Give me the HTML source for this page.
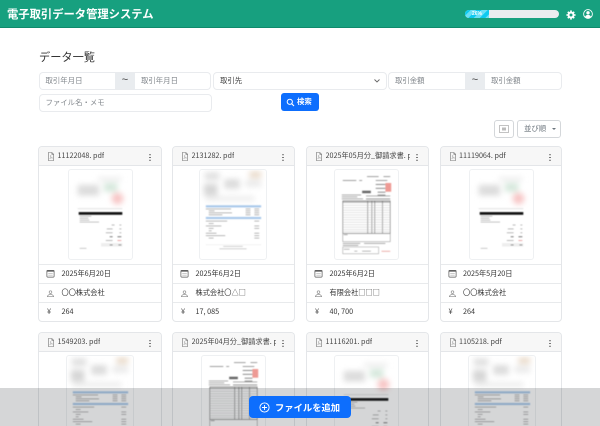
<!DOCTYPE html>
<html lang="ja"><head><meta charset="utf-8"><title>電子取引データ管理システム</title>
<style>
*{box-sizing:border-box}
html,body{margin:0;padding:0;width:600px;height:426px;overflow:hidden}
body{background:#fff;font-family:"Liberation Sans","Noto Sans CJK JP",sans-serif;color:#212529}
#root{position:relative;width:600px;height:426px;overflow:hidden;background:#fff}
.abs{position:absolute}
#hd{left:0;top:0;width:600px;height:28px;background:#17a07f;border-bottom:1px solid #0f8a6c}
#ttl{left:7px;top:5px;font-size:11.3px;line-height:18px;font-weight:700;color:#fff;font-family:"Noto Sans CJK JP",sans-serif;white-space:nowrap}
#pg{left:465px;top:10px;width:94px;height:8px;border-radius:4px;background:#e9ecef;overflow:hidden}
#pg div{width:24px;height:8px;background:repeating-linear-gradient(135deg,#0dcaf0 0 4px,#6adff6 4px 8px);color:#fff;font-size:5px;line-height:8px;font-weight:700;text-align:center}
#h1{left:39px;top:48px;font-size:11.2px;line-height:18px;color:#333;font-family:"Noto Sans CJK JP",sans-serif;white-space:nowrap}
.in{background:#fff;border:1px solid #e9ebee;border-radius:4px;height:18px;font-size:7.4px;line-height:16px;color:#82878c;padding-left:6px;font-family:"Noto Sans CJK JP",sans-serif;white-space:nowrap}
.gp{background:#e9ecef;border-top:1px solid #e9ebee;border-bottom:1px solid #e9ebee;width:20px;height:18px;font-size:11px;line-height:15px;text-align:center;color:#444}
#sb{left:281px;top:93px;width:38px;height:18px;background:#0d6efd;border-radius:3px;color:#fff;font-size:7.4px;line-height:18px;font-weight:700;padding-left:16px;font-family:"Noto Sans CJK JP",sans-serif}
.bt{border:1px solid #d4d7da;border-radius:3px;background:#fff}
#st{left:517px;top:120px;width:44px;height:18px;font-size:7.4px;line-height:16px;color:#6c757d;padding-left:6px;font-family:"Noto Sans CJK JP",sans-serif}
#st:after{content:"";position:absolute;left:34px;top:7px;border:2px solid transparent;border-top:2.5px solid #6c757d}
.c{position:absolute;height:176px;border:1px solid #e4e6e9;border-radius:4px;background:#fff;overflow:hidden;font-family:"Noto Sans CJK JP",sans-serif}
.c.s{height:94px;border-radius:4px 4px 0 0;border-bottom:0}
.h{position:absolute;left:0;top:0;right:0;height:19px;background:#f7f7f7;border-bottom:1px solid #e4e6e9;font-size:7.2px;line-height:18px;color:#444;white-space:nowrap;overflow:hidden}
.h span{position:absolute;left:18.5px;top:0;max-width:84px;overflow:hidden}
.h svg{position:absolute;left:8px;top:5px}
.dt{position:absolute;right:10px;top:9.5px;width:1.6px;height:1.6px;border-radius:50%;background:#666;box-shadow:0 2.8px 0 #666,0 -2.8px 0 #666}
.r{position:absolute;left:0;right:0;height:19.3px;border-top:1px solid #e8eaec;font-size:7.2px;line-height:18px;color:#333;white-space:nowrap}
.r span{position:absolute;left:22.5px;top:0}
.r svg{position:absolute;left:7px;top:4.5px}
.r i{position:absolute;left:8px;top:0;font-style:normal;font-size:7.4px;color:#444}
.r1{top:116.5px}.r2{top:136px}.r3{top:155px}
.t{position:absolute;top:22px;height:91px;border:1px solid #eef0f2;border-radius:3px;background:#fff;overflow:hidden}
.t use{filter:blur(.45px)}
#ov{left:0;top:388px;width:600px;height:38px;background:rgba(45,50,56,.2)}
#add{left:249px;top:396px;width:102px;height:22px;background:#0d6efd;border-radius:4px;color:#fff;font-size:9.3px;line-height:22px;font-weight:700;padding-left:26px;font-family:"Noto Sans CJK JP",sans-serif;white-space:nowrap}
</style></head><body><div id="root">
<svg width="0" height="0" style="position:absolute">
<defs>
<filter id="b3" x="-30%" y="-30%" width="160%" height="160%"><feGaussianBlur stdDeviation="3"/></filter>
<filter id="b1"><feGaussianBlur stdDeviation=".3"/></filter>
<symbol id="pdf" viewBox="0 0 9 10"><path d="M1.500.5h4l2 2v7h-6z M5.500.5v2h2" fill="none" stroke="#777" stroke-width=".7"/><path d="M3 7.600c1-1 1.600-2.600 1.400-3.600-.1-.6-.7-.4-.6.3.2 1 1.200 2.400 2.200 2.600.6.1.6-.5 0-.5-1.100 0-2.300.5-3 1.200z" fill="none" stroke="#888" stroke-width=".4"/></symbol>
<symbol id="cal" viewBox="0 0 10 10"><rect x="1" y="1.500" width="8" height="7.500" rx=".8" fill="none" stroke="#555" stroke-width=".8"/><rect x="1" y="1.500" width="8" height="1.500" fill="#666"/><path d="M2.500 5h5M2.500 6.800h5" stroke="#999" stroke-width=".6"/></symbol>
<symbol id="usr" viewBox="0 0 10 10"><circle cx="5" cy="3.500" r="1.500" fill="none" stroke="#888" stroke-width=".7"/><path d="M1.500 8.500c.5-2 1.800-2.500 3.500-2.500s3 .5 3.500 2.500z" fill="none" stroke="#888" stroke-width=".7"/></symbol>
<symbol id="t1" viewBox="0 0 65 91">
<g filter="url(#b3)"><rect x="9" y="15" width="22" height="11" fill="#dcdcdc"/><rect x="36" y="13" width="14" height="9" fill="#d5e8dc"/><circle cx="50" cy="29" r="6" fill="#f7c4c4"/><rect x="30" y="7" width="24" height="4" fill="#ececec"/></g>
<rect x="9" y="39" width="46" height="1" fill="#e2e2e2" filter="url(#b1)"/>
<rect x="10" y="43" width="45" height="2.800" fill="#111"/>
<g filter="url(#b1)" fill="#999"><rect x="11" y="47" width="12" height=".6"/><rect x="11" y="49" width="9" height=".6"/><rect x="11" y="51" width="10" height=".6"/><rect x="11" y="53" width="20" height=".6"/>
<rect x="44" y="56" width="3" height=".7"/><rect x="52" y="56" width="2" height=".7"/><rect x="39" y="60" width="6" height=".7"/><rect x="52" y="60" width="2" height=".7"/><rect x="38" y="64" width="7" height=".7"/><rect x="52" y="64" width="2" height=".7"/><rect x="42" y="68" width="3" height=".9" fill="#666"/><rect x="50" y="68" width="4" height=".9" fill="#666"/><rect x="38" y="72" width="7" height=".7"/><rect x="50" y="72" width="4" height=".7" fill="#e08080"/></g>
<rect x="33" y="75" width="22" height="3.500" fill="#eee"/><rect x="42" y="76.500" width="3" height=".8" fill="#777"/><rect x="51" y="76.500" width="3" height=".8" fill="#777"/>
<rect x="11" y="80" width="7" height=".8" fill="#bbb"/>
</symbol>
<symbol id="t2" viewBox="0 0 68 91">
<g filter="url(#b3)"><rect x="5" y="2" width="15" height="8" fill="#e0e0e0"/><rect x="25" y="9" width="16" height="10" fill="#dcdcdc"/><rect x="4" y="14" width="14" height="12" fill="#d6d6d6"/><rect x="51" y="1" width="12" height="7" fill="#eadbcb"/><rect x="47" y="10" width="16" height="7" fill="#eaeaea"/><rect x="6" y="27" width="50" height="4" fill="#e8e8e8"/></g>
<rect x="6" y="36" width="57" height="2.200" fill="#a8c8ea"/><rect x="6" y="48" width="57" height="2.200" fill="#a8c8ea"/>
<g filter="url(#b1)" fill="#888"><rect x="6" y="39.500" width="26" height=".6"/><rect x="47" y="39.500" width="5" height=".6"/><rect x="56" y="39.500" width="5" height=".6"/><rect x="9" y="41.500" width="6" height=".6"/><rect x="47" y="41.500" width="5" height=".6"/><rect x="56" y="41.500" width="5" height=".6"/><rect x="9" y="43.500" width="24" height=".6"/><rect x="47" y="43.500" width="5" height=".6"/><rect x="56" y="43.500" width="5" height=".6"/><rect x="9" y="45.500" width="14" height=".6"/><rect x="47" y="45.500" width="5" height=".6"/><rect x="56" y="45.500" width="5" height=".6"/>
<rect x="6" y="52" width="22" height=".6"/><rect x="56" y="52" width="5" height=".6"/><rect x="9" y="54.500" width="5" height=".6"/><rect x="6" y="57" width="16" height=".6"/><rect x="56" y="57" width="5" height=".6"/><rect x="9" y="59.500" width="5" height=".6"/><rect x="56" y="59.500" width="5" height=".6"/><rect x="9" y="62" width="3" height=".6"/><rect x="6" y="64.500" width="11" height=".6"/><rect x="56" y="64.500" width="5" height=".6"/><rect x="6" y="67" width="20" height=".6"/><rect x="56" y="67" width="5" height=".6"/><rect x="9" y="69.500" width="5" height=".6"/><rect x="56" y="69.500" width="5" height=".6"/></g>
<rect x="6" y="76.500" width="57" height=".4" fill="#ddd"/><rect x="24" y="78" width="20" height=".7" fill="#bbb" filter="url(#b1)"/><rect x="20" y="80.500" width="28" height=".7" fill="#bbb" filter="url(#b1)"/>
</symbol>
<symbol id="t3" viewBox="0 0 65 91">
<g filter="url(#b1)" fill="#888"><rect x="33" y="6" width="12" height=".8"/><rect x="50" y="6" width="7" height=".8"/><rect x="8" y="10" width="14" height=".8"/><rect x="25" y="10" width="3" height=".8"/><rect x="42" y="10" width="12" height=".8"/>
<rect x="42" y="14" width="10" height="1"/><rect x="42" y="18" width="10" height="1"/><rect x="44" y="22" width="8" height="1"/><rect x="44" y="25" width="8" height="1"/><rect x="28" y="21" width="9" height="2.500" fill="#666"/>
<rect x="7" y="25" width="20" height=".7"/><rect x="7" y="27" width="16" height=".7"/><rect x="7" y="29" width="22" height=".7"/><rect x="32" y="26" width="25" height=".7"/><rect x="32" y="29" width="25" height=".9"/></g>
<rect x="52" y="13" width="6" height="9" fill="#ee9a94" filter="url(#b1)"/>
<rect x="8" y="31.500" width="49" height="2" fill="#bbb"/>
<g fill="none" stroke="#666" stroke-width=".55"><rect x="8" y="31.500" width="49" height="33.500"/><path d="M33.700 31.500v33.500M38 31.500v33.500M41 31.500v33.500M49 31.500v33.500"/></g>
<g stroke="#bbb" stroke-width=".4"><path d="M8 36h49M8 38.500h49M8 41h49M8 43.500h49M8 46h49M8 48.500h49M8 51h49M8 53.500h49M8 56h49M8 58.500h49M8 61h49M8 63h49"/></g>
<rect x="8" y="65" width="49" height="8.500" fill="none" stroke="#888" stroke-width=".5"/><rect x="9" y="66" width="4" height=".7" fill="#888"/>
<g filter="url(#b1)" fill="#888"><rect x="8" y="75" width="18" height=".7"/><rect x="8" y="77" width="16" height=".7"/><rect x="30" y="75" width="22" height=".7"/></g>
<rect x="8" y="79" width="37" height="7" fill="none" stroke="#999" stroke-width=".5"/><rect x="9" y="81" width="6" height=".7" fill="#999"/><rect x="20" y="83" width="3" height=".7" fill="#999"/><rect x="28" y="83" width="9" height=".7" fill="#999"/><rect x="48" y="83" width="9" height=".9" fill="#e9a6a0" filter="url(#b1)"/>
</symbol>
</defs></svg>

<div id="hd" class="abs"></div>
<div id="ttl" class="abs">電子取引データ管理システム</div>
<div id="pg" class="abs"><div>26%</div></div>
<svg class="abs" style="left:566px;top:10px" width="10" height="10" viewBox="0 0 10 10"><circle cx="5" cy="5" r="2.500" fill="none" stroke="#fff" stroke-width="2"/><path d="M5 .4v2M5 7.600v2M.4 5h2M7.600 5h2M1.800 1.800l1.400 1.400M6.800 6.800l1.400 1.400M1.800 8.200l1.400-1.400M6.800 3.200l1.400-1.400" stroke="#fff" stroke-width="1.600"/></svg>
<svg class="abs" style="left:583px;top:9px" width="10" height="10" viewBox="0 0 10 10"><circle cx="5" cy="5" r="4.400" fill="none" stroke="#fff" stroke-width=".9"/><circle cx="5" cy="3.800" r="1.700" fill="#fff"/><path d="M2 8c.5-1.600 1.600-2.100 3-2.100s2.500.5 3 2.100a4.400 4.400 0 0 1-6 0z" fill="#fff"/></svg>

<div id="h1" class="abs">データ一覧</div>

<div class="abs in" style="left:38.500px;top:72px;width:77px;border-radius:4px 0 0 4px;border-right:0">取引年月日</div>
<div class="abs gp" style="left:115px;top:72px">~</div>
<div class="abs in" style="left:135px;top:72px;width:76px;border-radius:0 4px 4px 0;border-left:0;padding-left:6px">取引年月日</div>
<div class="abs in" style="left:213px;top:72px;width:174px;color:#444">取引先</div>
<svg class="abs" style="left:373px;top:78px" width="8" height="6" viewBox="0 0 8 6"><path d="M1.500 1.500L4 4l2.500-2.500" fill="none" stroke="#666" stroke-width=".9"/></svg>
<div class="abs in" style="left:388px;top:72px;width:78px;border-radius:4px 0 0 4px;border-right:0">取引金額</div>
<div class="abs gp" style="left:465px;top:72px">~</div>
<div class="abs in" style="left:485px;top:72px;width:76.500px;border-radius:0 4px 4px 0;border-left:0">取引金額</div>
<div class="abs in" style="left:38.500px;top:93.500px;width:173px">ファイル名・メモ</div>
<div id="sb" class="abs">検索</div>
<svg class="abs" style="left:285.500px;top:97.500px" width="9" height="9" viewBox="0 0 9 9"><circle cx="3.800" cy="3.800" r="2.600" fill="none" stroke="#fff" stroke-width="1"/><path d="M5.800 5.800L8 8" stroke="#fff" stroke-width="1.100"/></svg>

<div class="abs bt" style="left:494px;top:120px;width:20px;height:18px"></div>
<svg class="abs" style="left:499px;top:125px" width="10" height="8" viewBox="0 0 10 8"><rect x=".5" y=".5" width="9" height="7" fill="none" stroke="#aaa" stroke-width=".7"/><rect x="3" y="2.500" width="4" height="3" fill="#bbb"/></svg>
<div id="st" class="abs bt">並び順</div>

<!-- row 1 -->
<div class="c" style="left:38px;top:146px;width:123.500px"><div class="h"><svg width="8" height="9"><use href="#pdf"/></svg><span>11122048. pdf</span><div class="dt"></div></div>
<svg class="t" style="left:28.500px" width="65" height="91"><use href="#t1"/></svg>
<div class="r r1"><svg width="9" height="9"><use href="#cal"/></svg><span>2025年6月20日</span></div><div class="r r2"><svg width="9" height="9"><use href="#usr"/></svg><span>〇〇株式会社</span></div><div class="r r3"><i>¥</i><span>264</span></div></div>

<div class="c" style="left:172px;top:146px;width:123px"><div class="h"><svg width="8" height="9"><use href="#pdf"/></svg><span>2131282. pdf</span><div class="dt"></div></div>
<svg class="t" style="left:26px" width="68" height="91"><use href="#t2"/></svg>
<div class="r r1"><svg width="9" height="9"><use href="#cal"/></svg><span>2025年6月2日</span></div><div class="r r2"><svg width="9" height="9"><use href="#usr"/></svg><span>株式会社〇△□</span></div><div class="r r3"><i>¥</i><span>17, 085</span></div></div>

<div class="c" style="left:306px;top:146px;width:122.500px"><div class="h"><svg width="8" height="9"><use href="#pdf"/></svg><span>2025年05月分_御請求書. pdf</span><div class="dt"></div></div>
<svg class="t" style="left:27px" width="65" height="91"><use href="#t3"/></svg>
<div class="r r1"><svg width="9" height="9"><use href="#cal"/></svg><span>2025年6月2日</span></div><div class="r r2"><svg width="9" height="9"><use href="#usr"/></svg><span>有限会社□□□</span></div><div class="r r3"><i>¥</i><span>40, 700</span></div></div>

<div class="c" style="left:439.500px;top:146px;width:122.500px"><div class="h"><svg width="8" height="9"><use href="#pdf"/></svg><span>11119064. pdf</span><div class="dt"></div></div>
<svg class="t" style="left:28px" width="65" height="91"><use href="#t1"/></svg>
<div class="r r1"><svg width="9" height="9"><use href="#cal"/></svg><span>2025年5月20日</span></div><div class="r r2"><svg width="9" height="9"><use href="#usr"/></svg><span>〇〇株式会社</span></div><div class="r r3"><i>¥</i><span>264</span></div></div>

<!-- row 2 -->
<div class="c s" style="left:38px;top:332px;width:123.500px"><div class="h"><svg width="8" height="9"><use href="#pdf"/></svg><span>1549203. pdf</span><div class="dt"></div></div>
<svg class="t" style="left:27px" width="68" height="91"><use href="#t2"/></svg></div>
<div class="c s" style="left:172px;top:332px;width:123px"><div class="h"><svg width="8" height="9"><use href="#pdf"/></svg><span>2025年04月分_御請求書. pdf</span><div class="dt"></div></div>
<svg class="t" style="left:28px" width="65" height="91"><use href="#t3"/></svg></div>
<div class="c s" style="left:306px;top:332px;width:122.500px"><div class="h"><svg width="8" height="9"><use href="#pdf"/></svg><span>11116201. pdf</span><div class="dt"></div></div>
<svg class="t" style="left:27px" width="65" height="91"><use href="#t1"/></svg></div>
<div class="c s" style="left:439.500px;top:332px;width:122.500px"><div class="h"><svg width="8" height="9"><use href="#pdf"/></svg><span>1105218. pdf</span><div class="dt"></div></div>
<svg class="t" style="left:27px" width="68" height="91"><use href="#t2"/></svg></div>

<div id="ov" class="abs"></div>
<div id="add" class="abs">ファイルを追加</div>
<svg class="abs" style="left:259px;top:402px" width="11" height="11" viewBox="0 0 11 11"><circle cx="5.500" cy="5.500" r="4.600" fill="none" stroke="#fff" stroke-width=".9"/><path d="M5.500 3v5M3 5.500h5" stroke="#fff" stroke-width=".9"/></svg>
</div></body></html>
